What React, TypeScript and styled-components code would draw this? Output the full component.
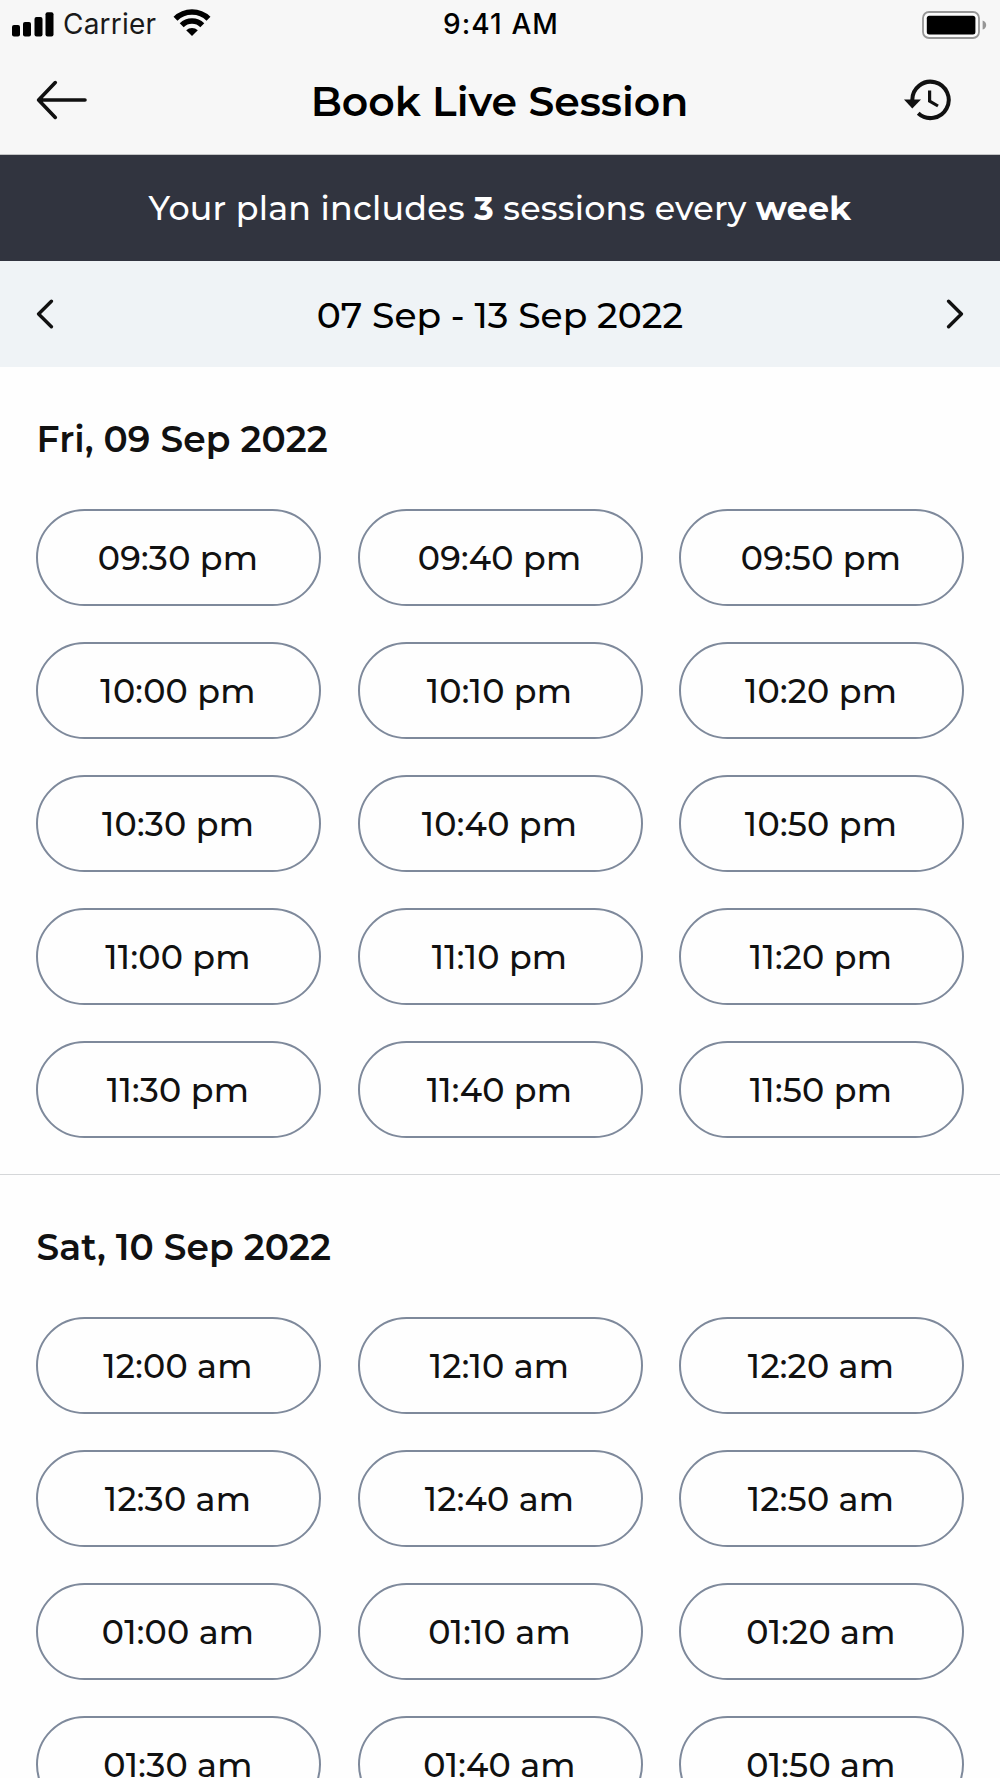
import React from "react";
import styled, { createGlobalStyle } from "styled-components";

const GlobalStyle = createGlobalStyle`
  *, *::before, *::after { box-sizing: border-box; }
  body { margin: 0; background: #fff; }
`;

const Screen = styled.div`
  width: 1000px;
  height: 1778px;
  overflow: hidden;
  background: #fefefe;
  color: #111;
  font-family: Montserrat, Inter, "Liberation Sans", sans-serif;
`;

const TopArea = styled.div`
  height: 155px;
  background: #f7f7f7;
  border-bottom: 1px solid #c4c5c6;
`;

const StatusBar = styled.div`
  display: grid;
  grid-template-columns: 1fr auto 1fr;
  align-items: center;
  height: 48px;
  padding: 0 13px 0 12px;
  color: #000;
  font-family: Inter, sans-serif;
  font-size: 28px;
  line-height: 48px;
`;

const StatusLeft = styled.div`
  display: flex;
  align-items: center;
`;

const Carrier = styled.span`
  margin-left: 9px;
  letter-spacing: 0.2px;
  color: #1a1a1a;
`;

const Clock = styled.span`
  padding-left: 3px;
  font-weight: 500;
  letter-spacing: 1.1px;
`;

const StatusRight = styled.div`
  display: flex;
  justify-content: flex-end;
  padding-top: 1px;
`;

const WifiIcon = styled.svg`
  margin-left: 17px;
  margin-top: -2px;
`;

const NavBar = styled.header`
  display: grid;
  grid-template-columns: 100px 1fr 100px;
  align-items: center;
  height: 104px;
  padding: 0 36px;
`;

const IconButton = styled.button<{ $end?: boolean; $inset?: number }>`
  display: flex;
  align-items: center;
  justify-content: ${(p) => (p.$end ? "flex-end" : "flex-start")};
  padding: 0 ${(p) => p.$inset ?? 0}px 0 0;
  border: 0;
  background: none;
  color: #111;
`;

const Title = styled.h1`
  margin: 0;
  padding: 1px 1px 0 0;
  text-align: center;
  font-size: 41px;
  line-height: 48px;
  font-weight: 600;
  color: #000;
  white-space: nowrap;
`;

const Banner = styled.div`
  display: flex;
  align-items: center;
  justify-content: center;
  height: 106px;
  background: #31343f;
  color: #fff;
  font-size: 33.3px;
  line-height: 40px;
  font-weight: 500;
  letter-spacing: 0.25px;
  white-space: pre;

  strong { font-weight: 700; }
`;

const WeekBar = styled.div`
  display: grid;
  grid-template-columns: 60px 1fr 60px;
  align-items: center;
  height: 106px;
  padding: 0 36px;
  background: #eff3f6;
`;

const WeekRange = styled.div`
  padding-top: 1px;
  text-align: center;
  font-size: 36px;
  line-height: 44px;
  font-weight: 500;
  letter-spacing: 0.05px;
  color: #000;
`;

const Day = styled.section`
  padding: 50px 36px 36px;
  border-bottom: 1px solid #d5d7d9;
`;

const DayTitle = styled.h2`
  margin: 0 0 48px;
  padding-left: 0.6px;
  font-size: 36px;
  line-height: 44px;
  font-weight: 600;
  letter-spacing: 0.07px;
`;

const Slots = styled.div`
  display: grid;
  grid-template-columns: repeat(3, 285px);
  justify-content: space-between;
  row-gap: 36px;
`;

const Slot = styled.button`
  height: 97px;
  padding: 0 1px 0 0;
  border: 2px solid #7e899b;
  border-radius: 49px;
  background: transparent;
  color: #111;
  font: inherit;
  font-size: 33.3px;
  font-weight: 500;
  line-height: 40px;
  letter-spacing: 0.25px;
`;

const days = [
  {
    title: "Fri, 09 Sep 2022",
    slots: [
      "09:30 pm", "09:40 pm", "09:50 pm",
      "10:00 pm", "10:10 pm", "10:20 pm",
      "10:30 pm", "10:40 pm", "10:50 pm",
      "11:00 pm", "11:10 pm", "11:20 pm",
      "11:30 pm", "11:40 pm", "11:50 pm",
    ],
  },
  {
    title: "Sat, 10 Sep 2022",
    slots: [
      "12:00 am", "12:10 am", "12:20 am",
      "12:30 am", "12:40 am", "12:50 am",
      "01:00 am", "01:10 am", "01:20 am",
      "01:30 am", "01:40 am", "01:50 am",
    ],
  },
];

const Signal = () => (
  <svg width="42" height="25" viewBox="0 0 42 25">
    <rect x="0" y="13" width="8" height="11.5" rx="2" />
    <rect x="11" y="10" width="8" height="14.5" rx="2" />
    <rect x="22.5" y="5" width="8" height="19.5" rx="2" />
    <rect x="33.5" y="0.2" width="8" height="24.3" rx="2" />
  </svg>
);

const Wifi = () => (
  <WifiIcon width="38" height="28" viewBox="0 0 38 28">
    <g fill="none" stroke="#000" strokeWidth="5.6">
      <path d="M2.5 9.8 A23.5 23.5 0 0 1 35.5 9.8" />
      <path d="M8.7 16.2 A14.6 14.6 0 0 1 29.3 16.2" />
    </g>
    <path d="M19 27 L13.2 21.3 A8.4 8.4 0 0 1 24.8 21.3 Z" />
  </WifiIcon>
);

const Battery = () => (
  <svg width="65" height="28" viewBox="0 0 65 28">
    <rect x="1" y="1" width="56" height="26" rx="6" fill="#fbfbfb" stroke="#969696" strokeWidth="1.8" />
    <rect x="4.8" y="4.8" width="48.6" height="18.6" rx="2.5" />
    <path d="M60.6 9.4 C65.4 10.7 65.4 17.3 60.6 18.6 Z" fill="#969696" />
  </svg>
);

const BackArrow = () => (
  <svg width="52" height="40" viewBox="0 0 52 40" fill="none" stroke="currentColor" strokeWidth="3.6" strokeLinecap="round" strokeLinejoin="round">
    <path d="M49 20 H3 M19.3 2.6 L2.6 20 L19.3 37.4" />
  </svg>
);

const History = () => (
  <svg width="47" height="42" viewBox="0 0 47 42">
    <path d="M8.3 21 A18.2 18.2 0 1 1 14.2 34.3" fill="none" stroke="currentColor" strokeWidth="4" />
    <path d="M0 20.5 H17 L8.3 29.6 Z" fill="currentColor" />
    <path d="M25.6 11.5 V22 L34 27" fill="none" stroke="currentColor" strokeWidth="3.2" />
  </svg>
);

const Chevron = ({ flip }: { flip?: boolean }) => (
  <svg width="18" height="30" viewBox="0 0 18 30" fill="none" stroke="currentColor" strokeWidth="3.4" strokeLinecap="round" strokeLinejoin="round">
    <path d={flip ? "M2.6 2.2 L15.4 15 L2.6 27.8" : "M15.4 2.2 L2.6 15 L15.4 27.8"} />
  </svg>
);

export default function App() {
  return (
    <Screen>
      <GlobalStyle />
      <TopArea>
        <StatusBar>
          <StatusLeft>
            <Signal />
            <Carrier>Carrier</Carrier>
            <Wifi />
          </StatusLeft>
          <Clock>9:41 AM</Clock>
          <StatusRight>
            <Battery />
          </StatusRight>
        </StatusBar>
        <NavBar>
          <IconButton aria-label="Back"><BackArrow /></IconButton>
          <Title>Book Live Session</Title>
          <IconButton $end $inset={13} aria-label="History"><History /></IconButton>
        </NavBar>
      </TopArea>
      <Banner>
        <span>Your plan includes <strong>3</strong> sessions every <strong>week</strong></span>
      </Banner>
      <WeekBar>
        <IconButton aria-label="Previous week"><Chevron /></IconButton>
        <WeekRange>07 Sep - 13 Sep 2022</WeekRange>
        <IconButton $end aria-label="Next week"><Chevron flip /></IconButton>
      </WeekBar>
      {days.map((day) => (
        <Day key={day.title}>
          <DayTitle>{day.title}</DayTitle>
          <Slots>
            {day.slots.map((slot) => <Slot key={slot}>{slot}</Slot>)}
          </Slots>
        </Day>
      ))}
    </Screen>
  );
}
